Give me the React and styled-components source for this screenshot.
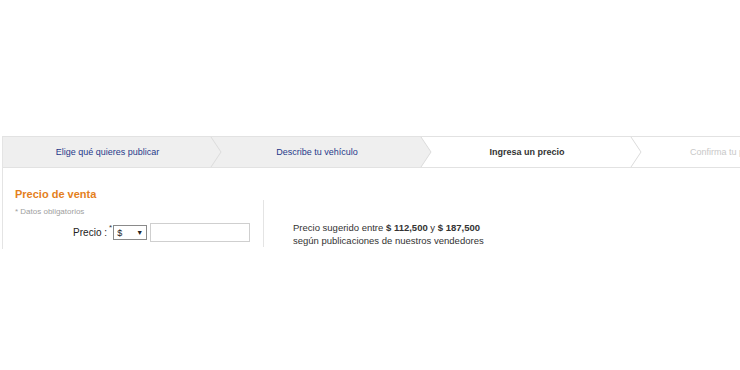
import React from "react";
import styled, { createGlobalStyle } from "styled-components";

const Global = createGlobalStyle`
  html, body { margin: 0; padding: 0; background: #fff; }
  body { font-family: "Liberation Sans", Arial, sans-serif; overflow: hidden; }
`;

const Page = styled.div`
  width: 740px;
  height: 370px;
  overflow: hidden;
  padding-top: 136px;
  box-sizing: border-box;
`;

const Frame = styled.div`
  margin-left: 2px;
  height: 112px;
  overflow: hidden;
  border-left: 1px solid #e4e4e4;
  border-top: 1px solid #e2e2e2;
`;

const Steps = styled.div`
  display: flex;
  height: 30px;
  border-bottom: 1px solid #e2e2e2;
`;

const Step = styled.div`
  position: relative;
  flex: 0 0 ${(p) => p.$w || 210}px;
  display: flex;
  align-items: center;
  justify-content: center;
  background: ${(p) => (p.$done ? "#efefef" : "#fff")};
  font-size: 9px;
  font-weight: ${(p) => (p.$current ? "bold" : "normal")};
  color: ${(p) => (p.$current ? "#333" : p.$done ? "#1f3a8a" : "#c8c8c8")};
  white-space: nowrap;
`;

const Chevron = styled.svg`
  position: absolute;
  top: 0;
  right: -10px;
  width: 11px;
  height: 30px;
  z-index: 2;
  overflow: visible;
`;

const Arrow = ({ fill }) => (
  <Chevron viewBox="0 0 11 30" preserveAspectRatio="none">
    <polygon points="0,0 10,15 0,30" fill={fill} />
    <polyline points="0,0 10,15 0,30" fill="none" stroke="#dcdcdc" strokeWidth="1" />
  </Chevron>
);

const Body = styled.div`
  display: flex;
`;

const LeftPanel = styled.div`
  flex: 0 0 248px;
  padding: 20px 0 0 12px;
`;

const Title = styled.div`
  font-size: 11px;
  line-height: 13px;
  font-weight: bold;
  color: #e4801c;
`;

const Note = styled.div`
  margin-top: 6px;
  font-size: 8px;
  line-height: 10px;
  color: #a0a0a0;
`;

const Row = styled.div`
  margin-top: 6px;
  display: flex;
  align-items: center;
`;

const Label = styled.span`
  flex: 0 0 92px;
  text-align: right;
  font-size: 10px;
  color: #222;
`;

const Star = styled.sup`
  font-size: 8px;
  color: #333;
  margin: 1px 1px 0 2px;
  align-self: flex-start;
  line-height: 8px;
`;

const Select = styled.div`
  box-sizing: border-box;
  width: 34px;
  height: 15px;
  border: 1px solid #8a8a8a;
  display: flex;
  align-items: center;
  justify-content: space-between;
  padding: 0 3px 0 3px;
  font-size: 9px;
  color: #222;
  background: #fff;
`;

const Caret = styled.span`
  font-size: 7px;
`;

const Input = styled.div`
  box-sizing: border-box;
  margin-left: 3px;
  width: 100px;
  height: 19px;
  border: 1px solid #cfcfcf;
  background: #fff;
`;

const RightPanel = styled.div`
  margin-top: 32px;
  border-left: 1px solid #e4e4e4;
  padding: 21px 0 0 29px;
  font-size: 9.5px;
  line-height: 13px;
  color: #333;
  white-space: nowrap;
`;

export default function App() {
  return (
    <>
      <Global />
      <Page>
        <Frame>
          <Steps>
            <Step $done $w={209}>
              Elige qué quieres publicar
              <Arrow fill="#efefef" />
            </Step>
            <Step $done>
              Describe tu vehículo
              <Arrow fill="#efefef" />
            </Step>
            <Step $current>
              Ingresa un precio
              <Arrow fill="#fff" />
            </Step>
            <Step>Confirma tu publicación</Step>
          </Steps>
          <Body>
            <LeftPanel>
              <Title>Precio de venta</Title>
              <Note>* Datos obligatorios</Note>
              <Row>
                <Label>Precio :</Label>
                <Star>*</Star>
                <Select>
                  <span>$</span>
                  <Caret>▼</Caret>
                </Select>
                <Input />
              </Row>
            </LeftPanel>
            <RightPanel>
              <div>
                Precio sugerido entre <b>$ 112,500</b> y <b>$ 187,500</b>
              </div>
              <div>según publicaciones de nuestros vendedores</div>
            </RightPanel>
          </Body>
        </Frame>
      </Page>
    </>
  );
}
